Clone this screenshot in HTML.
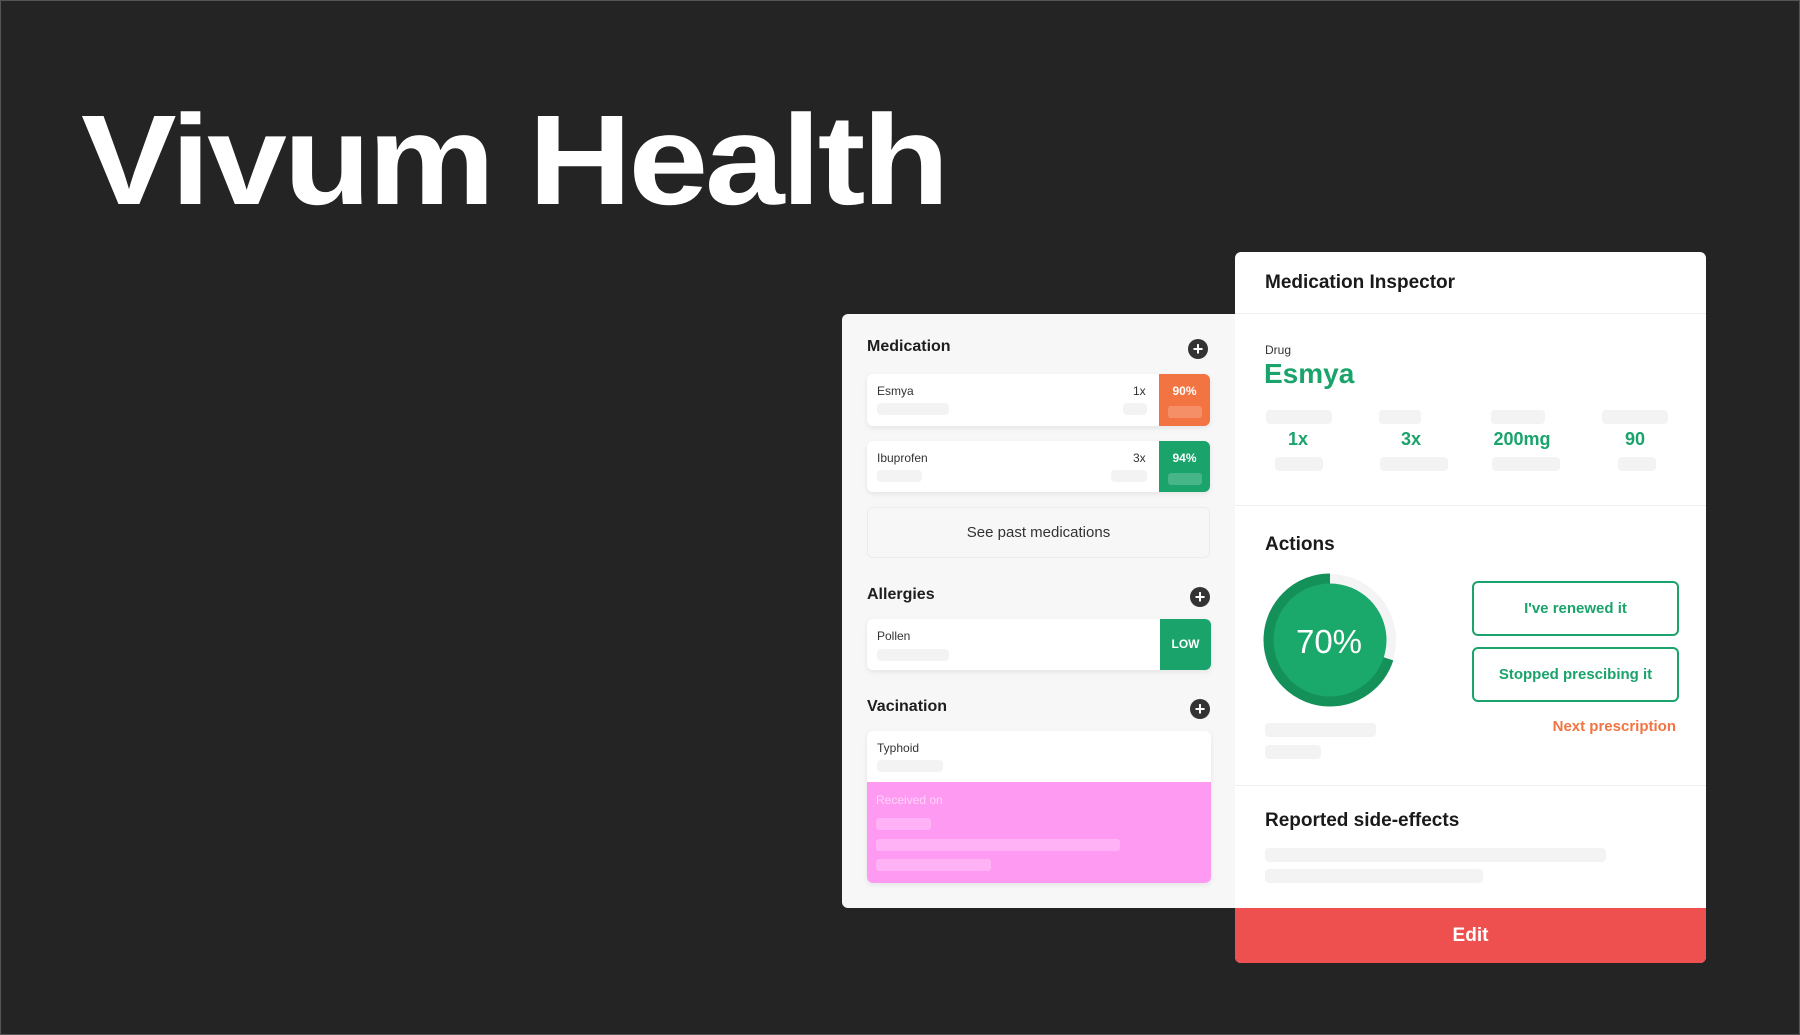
<!DOCTYPE html>
<html><head><meta charset="utf-8"><style>
*{margin:0;padding:0;box-sizing:border-box}
body{width:1800px;height:1035px;background:#242424;position:relative;overflow:hidden;font-family:"Liberation Sans",sans-serif;border:1px solid #555}
.abs{position:absolute}
h1{position:absolute;left:80px;top:96px;font-size:128px;font-weight:bold;color:#fff;letter-spacing:-3px;line-height:1;white-space:nowrap;transform:scaleX(1.12);transform-origin:0 0}
.lp{left:841px;top:313px;width:394px;height:594px;background:#f7f7f7;border-radius:6px 0 0 6px}
.rp{left:1234px;top:251px;width:471px;height:711px;background:#fff;border-radius:6px;overflow:hidden}
.sec{font-size:16px;font-weight:bold;color:#1e1e1e}
.plus{width:20px;height:20px;border-radius:50%;background:#333;color:#fff;font-size:18px;line-height:20px;text-align:center;font-weight:bold}
.card{background:#fff;border-radius:6px;box-shadow:0 2px 6px rgba(0,0,0,.08);overflow:hidden}
.ph{background:#f3f3f3;border-radius:4px}
.small{font-size:12px;color:#333}
.badge{color:#fff;font-size:12px;font-weight:bold;text-align:center}
.g{color:#1aa36a}
.btn{border:2px solid #1aa36a;border-radius:6px;color:#1aa36a;font-weight:bold;font-size:15px;text-align:center}
</style></head><body>
<h1>Vivum Health</h1>

<div class="abs lp">
</div>
<div class="abs sec" style="left:866px;top:337px">Medication</div>
<div class="abs plus" style="left:1187px;top:338px">+</div>

<div class="abs card" style="left:866px;top:373px;width:343px;height:52px">
 <div class="abs small" style="left:10px;top:10px">Esmya</div>
 <div class="abs small" style="left:266px;top:10px">1x</div>
 <div class="abs ph" style="left:10px;top:29px;width:72px;height:12px"></div>
 <div class="abs ph" style="left:256px;top:29px;width:24px;height:12px"></div>
 <div class="abs badge" style="left:292px;top:0;width:51px;height:52px;background:#f37443;padding-top:10px">90%<div style="margin:8px auto 0;width:34px;height:12px;background:rgba(255,255,255,.2);border-radius:3px"></div></div>
</div>
<div class="abs card" style="left:866px;top:440px;width:343px;height:51px">
 <div class="abs small" style="left:10px;top:10px">Ibuprofen</div>
 <div class="abs small" style="left:266px;top:10px">3x</div>
 <div class="abs ph" style="left:10px;top:29px;width:45px;height:12px"></div>
 <div class="abs ph" style="left:244px;top:29px;width:36px;height:12px"></div>
 <div class="abs badge" style="left:292px;top:0;width:51px;height:51px;background:#1aa36a;padding-top:10px">94%<div style="margin:8px auto 0;width:34px;height:12px;background:rgba(255,255,255,.2);border-radius:3px"></div></div>
</div>
<div class="abs" style="left:866px;top:506px;width:343px;height:51px;border:1px solid #ececec;border-radius:6px;text-align:center;line-height:49px;font-size:15px;color:#333">See past medications</div>

<div class="abs sec" style="left:866px;top:585px">Allergies</div>
<div class="abs plus" style="left:1189px;top:586px">+</div>
<div class="abs card" style="left:866px;top:618px;width:344px;height:51px">
 <div class="abs small" style="left:10px;top:10px">Pollen</div>
 <div class="abs ph" style="left:10px;top:30px;width:72px;height:12px"></div>
 <div class="abs badge" style="left:293px;top:0;width:51px;height:51px;background:#1aa36a;line-height:51px">LOW</div>
</div>

<div class="abs sec" style="left:866px;top:697px">Vacination</div>
<div class="abs plus" style="left:1189px;top:698px">+</div>
<div class="abs card" style="left:866px;top:730px;width:344px;height:152px">
 <div class="abs small" style="left:10px;top:10px">Typhoid</div>
 <div class="abs ph" style="left:10px;top:29px;width:66px;height:12px"></div>
 <div class="abs" style="left:0;top:51px;width:344px;height:101px;background:#ff9af3">
  <div class="abs" style="left:9px;top:11px;font-size:12px;color:#ffd3f9">Received on</div>
  <div class="abs" style="left:9px;top:36px;width:55px;height:12px;background:#ffb3f6;border-radius:3px"></div>
  <div class="abs" style="left:9px;top:57px;width:244px;height:12px;background:#ffb3f6;border-radius:3px"></div>
  <div class="abs" style="left:9px;top:77px;width:115px;height:12px;background:#ffb3f6;border-radius:3px"></div>
 </div>
</div>

<div class="abs rp">
 <div class="abs" style="left:30px;top:20px;font-size:19px;font-weight:bold;color:#1a1a1a">Medication Inspector</div>
 <div class="abs" style="left:0;top:61px;width:471px;height:1px;background:#eee"></div>
 <div class="abs" style="left:30px;top:91px;font-size:12px;color:#333">Drug</div>
 <div class="abs g" style="left:29px;top:106px;font-size:28px;font-weight:bold">Esmya</div>
 <div class="abs ph" style="left:31px;top:158px;width:66px;height:14px"></div>
 <div class="abs ph" style="left:144px;top:158px;width:42px;height:14px"></div>
 <div class="abs ph" style="left:256px;top:158px;width:54px;height:14px"></div>
 <div class="abs ph" style="left:367px;top:158px;width:66px;height:14px"></div>
 <div class="abs g" style="left:13px;width:100px;top:177px;text-align:center;font-size:18px;font-weight:bold">1x</div>
 <div class="abs g" style="left:126px;width:100px;top:177px;text-align:center;font-size:18px;font-weight:bold">3x</div>
 <div class="abs g" style="left:237px;width:100px;top:177px;text-align:center;font-size:18px;font-weight:bold">200mg</div>
 <div class="abs g" style="left:350px;width:100px;top:177px;text-align:center;font-size:18px;font-weight:bold">90</div>
 <div class="abs ph" style="left:40px;top:205px;width:48px;height:14px"></div>
 <div class="abs ph" style="left:145px;top:205px;width:68px;height:14px"></div>
 <div class="abs ph" style="left:257px;top:205px;width:68px;height:14px"></div>
 <div class="abs ph" style="left:383px;top:205px;width:38px;height:14px"></div>
 <div class="abs" style="left:0;top:253px;width:471px;height:1px;background:#eee"></div>
 <div class="abs" style="left:30px;top:282px;font-size:19px;font-weight:bold;color:#1a1a1a">Actions</div>
 <svg class="abs" style="left:28px;top:321px" width="134" height="134" viewBox="0 0 134 134">
  <circle cx="67" cy="67" r="61" fill="none" stroke="#f4f4f4" stroke-width="10"/>
  <circle cx="67" cy="67" r="61" fill="none" stroke="#139159" stroke-width="11" stroke-dasharray="268.3 400" transform="rotate(-90 67 67) scale(1 -1) translate(0 -134)"/>
  <circle cx="67" cy="67" r="56.5" fill="#1aa86b"/>
  <text x="66" y="80" text-anchor="middle" font-family="Liberation Sans" font-size="33" fill="#fff">70%</text>
 </svg>
 <div class="abs btn" style="left:237px;top:329px;width:207px;height:55px;line-height:51px">I've renewed it</div>
 <div class="abs btn" style="left:237px;top:395px;width:207px;height:55px;line-height:51px">Stopped prescibing it</div>
 <div class="abs" style="right:30px;top:466px;color:#f37443;font-size:15px;font-weight:bold">Next prescription</div>
 <div class="abs ph" style="left:30px;top:471px;width:111px;height:14px"></div>
 <div class="abs ph" style="left:30px;top:493px;width:56px;height:14px"></div>
 <div class="abs" style="left:0;top:533px;width:471px;height:1px;background:#eee"></div>
 <div class="abs" style="left:30px;top:558px;font-size:19px;font-weight:bold;color:#1a1a1a">Reported side-effects</div>
 <div class="abs ph" style="left:30px;top:596px;width:341px;height:14px"></div>
 <div class="abs ph" style="left:30px;top:617px;width:218px;height:14px"></div>
 <div class="abs" style="left:0;top:656px;width:471px;height:55px;background:#ee4f4f;color:#fff;font-size:19px;font-weight:bold;text-align:center;line-height:55px">Edit</div>
</div>
</body></html>
